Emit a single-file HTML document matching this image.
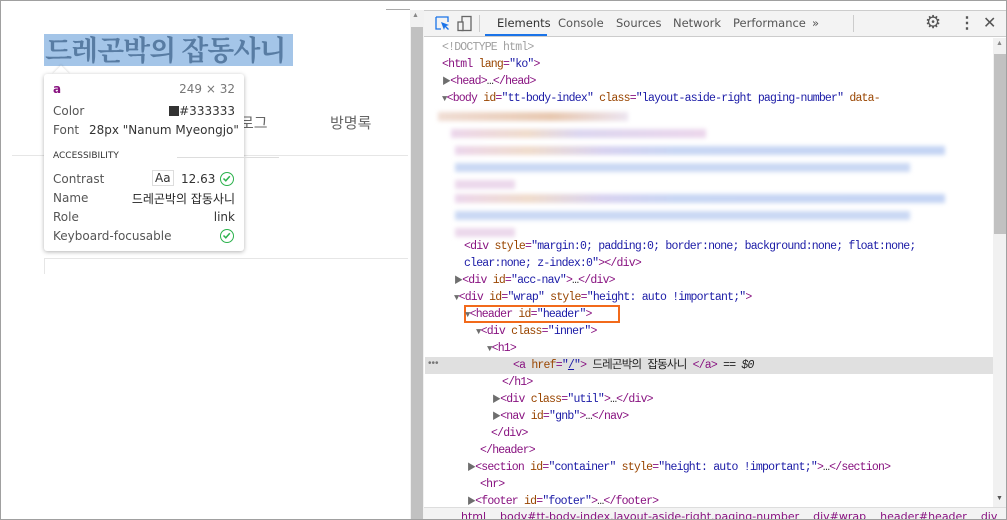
<!DOCTYPE html>
<html><head><meta charset="utf-8"><style>
*{margin:0;padding:0;box-sizing:border-box}
body{width:1007px;height:520px;overflow:hidden;background:#fff;position:relative;font-family:"Liberation Sans","Noto Sans CJK KR",sans-serif;}
.abs{position:absolute}
#frame{left:0;top:0;width:1007px;height:520px;border:1px solid #a0a0a0;}
.code{font-family:"Liberation Mono","Noto Sans CJK KR",monospace;font-size:11.5px;letter-spacing:-0.8px;white-space:pre;line-height:17px;height:17px;color:#881280}
.at{color:#994500}.av{color:#1a1aa6}.gr{color:#a0a0a0}.tx{color:#222}
.tri{color:#6e6e6e;font-size:9px}
.tt{font-size:12px;color:#555;font-family:"DejaVu Sans","Noto Sans CJK KR",sans-serif}
.blur{filter:blur(2px);height:9px}
</style></head><body>
<div class="abs" style="left:386px;top:9px;width:24px;height:1px;background:#aaa"></div>
<div class="abs" style="left:44px;top:34px;width:249px;height:32px;background:#a4c5e8"></div>
<div class="abs" style="left:45px;top:33px;font-size:28px;color:#587ca3;font-family:'Noto Serif CJK SC','Noto Sans CJK KR',serif;font-weight:bold;line-height:32px;white-space:nowrap;letter-spacing:-1px">드레곤박의 잡동사니</div>
<div class="abs" style="left:240px;top:112px;font-size:15px;color:#666;font-family:'Noto Sans CJK KR',sans-serif">로그</div>
<div class="abs" style="left:330px;top:112px;font-size:15px;color:#666;font-family:'Noto Sans CJK KR',sans-serif">방명록</div>
<div class="abs" style="left:12px;top:155px;width:396px;height:1px;background:#e6e6e6"></div>
<div class="abs" style="left:44px;top:258px;width:364px;height:1px;background:#e6e6e6"></div>
<div class="abs" style="left:44px;top:258px;width:1px;height:16px;background:#e6e6e6"></div>
<div class="abs" style="left:55px;top:68px;width:12px;height:12px;background:#fff;transform:rotate(45deg);box-shadow:-1px -1px 2px rgba(0,0,0,.1)"></div>
<div class="abs" style="left:44px;top:74px;width:200px;height:177px;background:#fff;border-radius:3px;box-shadow:0 1px 4px rgba(0,0,0,.3)">
<div class="abs tt" style="left:9px;top:8px;color:#881280;font-weight:bold">a</div>
<div class="abs tt" style="right:9px;top:8px;color:#777">249 × 32</div>
<div class="abs tt" style="left:9px;top:30px">Color</div>
<div class="abs tt" style="right:9px;top:30px;color:#333"><span style="display:inline-block;width:10px;height:10px;background:#333;vertical-align:-1px"></span>#333333</div>
<div class="abs tt" style="left:9px;top:49px">Font <span style="color:#333;margin-left:6px">28px "Nanum Myeongjo"</span></div>
<div class="abs tt" style="left:9px;top:77px;font-size:9px;color:#333">ACCESSIBILITY</div>
<div class="abs" style="left:133px;top:83px;width:102px;height:1px;background:#ddd"></div>
<div class="abs tt" style="left:9px;top:98px">Contrast</div>
<div class="abs tt" style="left:108px;top:96px;border:1px solid #ddd;padding:0 2px;color:#333">Aa</div>
<div class="abs tt" style="left:137px;top:98px;color:#333">12.63</div>
<div class="abs" style="left:176px;top:98px;width:14px;height:14px;border:1.5px solid #2bb24c;border-radius:50%"><svg width="11" height="11" style="position:absolute;left:0;top:0"><path d="M2.5 5.5l2.3 2.3 4-4.5" stroke="#2bb24c" stroke-width="1.5" fill="none"/></svg></div>
<div class="abs tt" style="left:9px;top:117px">Name</div>
<div class="abs tt" style="right:9px;top:116px;color:#222">드레곤박의 잡동사니</div>
<div class="abs tt" style="left:9px;top:136px">Role</div>
<div class="abs tt" style="right:9px;top:136px;color:#333">link</div>
<div class="abs tt" style="left:9px;top:155px">Keyboard-focusable</div>
<div class="abs" style="left:176px;top:155px;width:14px;height:14px;border:1.5px solid #2bb24c;border-radius:50%"><svg width="11" height="11" style="position:absolute;left:0;top:0"><path d="M2.5 5.5l2.3 2.3 4-4.5" stroke="#2bb24c" stroke-width="1.5" fill="none"/></svg></div>
</div>
<div class="abs" style="left:410px;top:10px;width:14px;height:510px;background:#f1f1f1"></div>
<div class="abs" style="left:411px;top:27px;width:12px;height:493px;background:#c1c1c1"></div>
<div class="abs" style="left:412px;top:12px;font-size:7px;color:#888">▲</div>
<div class="abs" style="left:424px;top:10px;width:583px;height:27px;background:#f3f3f3;border-bottom:1px solid #ccc;border-top:1px solid #ccc"></div>
<svg class="abs" style="left:434px;top:15px" width="18" height="18"><path d="M2 2h12v5M2 2v12h5" stroke="#1a73e8" fill="none" stroke-width="1.3"/><path d="M7 7l8 3-3 1 3 3-1 1-3-3-1 3z" fill="#1a73e8"/></svg>
<svg class="abs" style="left:456px;top:15px" width="18" height="18"><rect x="6" y="1.5" width="9" height="14" stroke="#666" fill="none" stroke-width="1.3"/><rect x="2" y="7" width="5" height="8.5" stroke="#666" fill="#f3f3f3" stroke-width="1.3"/></svg>
<div class="abs" style="left:479px;top:15px;width:1px;height:17px;background:#ccc"></div>
<div class="abs" style="left:485px;top:34px;width:62px;height:2px;background:#1a73e8"></div>
<div class="abs" style="left:0;top:16px;font-size:11.5px;color:#333;font-family:'DejaVu Sans',sans-serif;width:1007px;height:16px">
<span class="abs" style="left:497px">Elements</span><span class="abs" style="left:558px;color:#555">Console</span><span class="abs" style="left:616px;color:#555">Sources</span><span class="abs" style="left:673px;color:#555">Network</span><span class="abs" style="left:733px;color:#555">Performance</span><span class="abs" style="left:812px;color:#555">»</span></div>
<div class="abs" style="left:853px;top:15px;width:1px;height:17px;background:#ccc"></div>
<div class="abs" style="left:925px;top:12px;font-size:18px;color:#555">⚙</div>
<div class="abs" style="left:959px;top:13px;font-size:16px;color:#555;font-weight:bold">⋮</div>
<div class="abs" style="left:983px;top:13px;font-size:16px;color:#555">✕</div>
<div class="abs" style="left:993px;top:38px;width:14px;height:469px;background:#f1f1f1"></div>
<div class="abs" style="left:994px;top:54px;width:12px;height:180px;background:#c1c1c1"></div>
<div class="abs" style="left:996px;top:40px;font-size:7px;color:#888">▲</div>
<div class="abs" style="left:996px;top:495px;font-size:7px;color:#555">▼</div>
<div class="abs" style="left:425px;top:357px;width:568px;height:17px;background:#e0e0e0"></div>
<div class="abs" style="left:428px;top:358px;font-size:10px;color:#777">•••</div>
<div class="abs" style="left:438px;top:0">
<div class="abs code gr" style="left:4px;top:39px">&lt;!DOCTYPE html&gt;</div>
<div class="abs code" style="left:4px;top:56px">&lt;html <span class="at">lang</span>=<span class="av">"ko"</span>&gt;</div>
<div class="abs code" style="left:4px;top:73px"><span class="tri">▶</span>&lt;head&gt;<span class="tx">…</span>&lt;/head&gt;</div>
<div class="abs code" style="left:4px;top:90px"><span class="tri">▼</span>&lt;body <span class="at">id</span>=<span class="av">"tt-body-index"</span> <span class="at">class</span>=<span class="av">"layout-aside-right paging-number"</span> <span class="at">data-</span></div>
<div class="abs blur" style="left:0px;top:112px;width:190px;background:linear-gradient(90deg,#f0ddd4,#e8c8b0 60%,#ece4f0)"></div>
<div class="abs blur" style="left:13px;top:129px;width:255px;background:linear-gradient(90deg,#ecd6ec,#f0dccc 30%,#dcd6f0 50%,#ecd6ec)"></div>
<div class="abs blur" style="left:17px;top:146px;width:490px;background:linear-gradient(90deg,#ecd6ec,#f0dccc 15%,#d8d2f0 30%,#c8d6f4 45%,#c4d4f4)"></div>
<div class="abs blur" style="left:17px;top:163px;width:455px;background:#cad8f4"></div>
<div class="abs blur" style="left:17px;top:180px;width:60px;background:#ecd8ec"></div>
<div class="abs blur" style="left:17px;top:194px;width:490px;background:linear-gradient(90deg,#ecd6ec,#f0dccc 15%,#d8d2f0 30%,#c8d6f4 45%,#c4d4f4)"></div>
<div class="abs blur" style="left:17px;top:211px;width:455px;background:#cad8f4"></div>
<div class="abs blur" style="left:17px;top:228px;width:60px;background:#ecd8ec"></div>
<div class="abs code" style="left:26px;top:238px">&lt;div <span class="at">style</span>=<span class="av">"margin:0; padding:0; border:none; background:none; float:none;</span></div>
<div class="abs code" style="left:26px;top:255px"><span class="av">clear:none; z-index:0"</span>&gt;&lt;/div&gt;</div>
<div class="abs code" style="left:16px;top:272px"><span class="tri">▶</span>&lt;div <span class="at">id</span>=<span class="av">"acc-nav"</span>&gt;<span class="tx">…</span>&lt;/div&gt;</div>
<div class="abs code" style="left:16px;top:289px"><span class="tri">▼</span>&lt;div <span class="at">id</span>=<span class="av">"wrap"</span> <span class="at">style</span>=<span class="av">"height: auto !important;"</span>&gt;</div>
<div class="abs" style="left:26px;top:305px;width:156px;height:18px;border:2px solid #f26a1b"></div>
<div class="abs code" style="left:27px;top:306px"><span class="tri">▼</span>&lt;header <span class="at">id</span>=<span class="av">"header"</span>&gt;</div>
<div class="abs code" style="left:38px;top:323px"><span class="tri">▼</span>&lt;div <span class="at">class</span>=<span class="av">"inner"</span>&gt;</div>
<div class="abs code" style="left:49px;top:340px"><span class="tri">▼</span>&lt;h1&gt;</div>
<div class="abs code" style="left:75px;top:357px">&lt;a <span class="at">href</span>=<span class="av">"<u>/</u>"</span>&gt; <span class="tx">드레곤박의 잡동사니</span> &lt;/a&gt; <span class="tx">== <i>$0</i></span></div>
<div class="abs code" style="left:64px;top:374px">&lt;/h1&gt;</div>
<div class="abs code" style="left:54px;top:391px"><span class="tri">▶</span>&lt;div <span class="at">class</span>=<span class="av">"util"</span>&gt;<span class="tx">…</span>&lt;/div&gt;</div>
<div class="abs code" style="left:54px;top:408px"><span class="tri">▶</span>&lt;nav <span class="at">id</span>=<span class="av">"gnb"</span>&gt;<span class="tx">…</span>&lt;/nav&gt;</div>
<div class="abs code" style="left:53px;top:425px">&lt;/div&gt;</div>
<div class="abs code" style="left:42px;top:442px">&lt;/header&gt;</div>
<div class="abs code" style="left:29px;top:459px"><span class="tri">▶</span>&lt;section <span class="at">id</span>=<span class="av">"container"</span> <span class="at">style</span>=<span class="av">"height: auto !important;"</span>&gt;<span class="tx">…</span>&lt;/section&gt;</div>
<div class="abs code" style="left:42px;top:476px">&lt;hr&gt;</div>
<div class="abs code" style="left:29px;top:493px"><span class="tri">▶</span>&lt;footer <span class="at">id</span>=<span class="av">"footer"</span>&gt;<span class="tx">…</span>&lt;/footer&gt;</div>
</div>
<div class="abs" style="left:424px;top:507px;width:583px;height:13px;background:#f3f3f3;border-top:1px solid #ddd;overflow:hidden">
<div class="abs" style="left:37px;top:2px;font-size:11px;color:#881280;white-space:nowrap;font-family:'DejaVu Sans',sans-serif">html &nbsp;&nbsp; body#tt-body-index.layout-aside-right.paging-number &nbsp;&nbsp; div#wrap &nbsp;&nbsp; header#header &nbsp;&nbsp; div</div></div>
<div id="frame" class="abs"></div>
</body></html>
